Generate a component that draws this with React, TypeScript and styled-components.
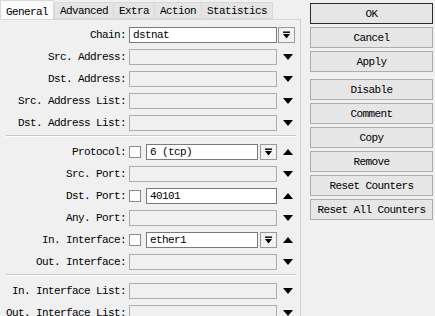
import React from "react";
import styled, { createGlobalStyle } from "styled-components";

const GlobalStyle = createGlobalStyle`
  html, body {
    margin: 0;
    padding: 0;
    background: #f0f0f0;
  }
  body {
    font-family: "Liberation Mono", "DejaVu Sans Mono", monospace;
    font-size: 11px;
    letter-spacing: -0.6px;
    color: #000;
  }
`;

const Window = styled.div`
  display: flex;
  width: 435px;
  height: 316px;
  overflow: hidden;
  background: #f0f0f0;
`;

const LeftSide = styled.div`
  width: 301px;
  display: flex;
  flex-direction: column;
`;

const TabBar = styled.div`
  display: flex;
  align-items: flex-end;
  height: 19px;
`;

const Tab = styled.div<{ $active?: boolean }>`
  height: ${(p) => (p.$active ? "19px" : "17px")};
  box-sizing: border-box;
  padding: 0 5px;
  border: 1px solid #d9d9d9;
  border-bottom: ${(p) => (p.$active ? "none" : "1px solid #d9d9d9")};
  margin-right: ${(p) => (p.$active ? "0" : "-1px")};
  background: ${(p) => (p.$active ? "#fbfbfb" : "#e4e4e4")};
  line-height: ${(p) => (p.$active ? "22px" : "17px")};
  white-space: nowrap;
`;

const Panel = styled.div`
  flex: 1;
  border-top: 1px solid #d9d9d9;
  border-right: 1px solid #d0d0d0;
  padding-top: 7px;
`;

const Section = styled.div`
  display: flex;
  flex-direction: column;
  gap: 6px;
`;

const Separator = styled.div`
  margin: 4px 4px 7px 6px;
  height: 1px;
  background: #c9c9c9;
  border-bottom: 1px solid #ffffff;
`;

const Row = styled.div`
  display: flex;
  align-items: center;
  height: 16px;
`;

const Label = styled.div`
  width: 126px;
  text-align: right;
  line-height: 16px;
  white-space: nowrap;
`;

const Field = styled.div`
  display: flex;
  align-items: center;
  width: 148px;
  margin-left: 3px;
  height: 16px;
`;

const Input = styled.div<{ $enabled?: boolean }>`
  flex: 1;
  height: 16px;
  box-sizing: border-box;
  border: 1px solid ${(p) => (p.$enabled ? "#7a7a7a" : "#adadad")};
  background: ${(p) => (p.$enabled ? "#ffffff" : "#f0f0f0")};
  padding-left: 3px;
  line-height: 14px;
  white-space: nowrap;
  overflow: hidden;
`;

const CheckBox = styled.div`
  width: 12px;
  height: 12px;
  box-sizing: border-box;
  border: 1px solid #8a8a8a;
  background: #fff;
  margin-right: 5px;
`;

const DropButton = styled.div<{ $inField?: boolean }>`
  width: 17px;
  height: 16px;
  box-sizing: border-box;
  border: 1px solid #9a9a9a;
  background: #f2f2f2;
  margin-left: ${(p) => (p.$inField ? "2px" : "0")};
  display: flex;
  align-items: center;
  justify-content: center;
`;

const Slot = styled.div`
  width: 18px;
  margin-left: 1px;
  height: 16px;
  display: flex;
  align-items: center;
  justify-content: center;
`;

const ArrowSlot = styled(Slot)`
  padding-left: 2px;
  box-sizing: border-box;
`;

const ButtonColumn = styled.div`
  display: flex;
  flex-direction: column;
  gap: 3px;
  margin-left: 9px;
  padding-top: 3px;
  width: 123px;
`;

const Button = styled.div<{ $default?: boolean; $gapAbove?: boolean }>`
  height: 21px;
  box-sizing: border-box;
  border: 1px solid ${(p) => (p.$default ? "#2b2b2b" : "#adadad")};
  background: #e6e6e6;
  display: flex;
  align-items: center;
  justify-content: center;
  white-space: nowrap;
  margin-top: ${(p) => (p.$gapAbove ? "4px" : "0")};
`;

const DropGlyph = () => (
  <svg width="9" height="9" viewBox="0 0 9 9">
    <rect x="1" y="0.5" width="7" height="1.4" fill="#000" />
    <polygon points="1,3 8,3 4.5,7.5" fill="#000" />
  </svg>
);

const Arrow = ({ up }: { up?: boolean }) => (
  <svg width="10" height="6" viewBox="0 0 10 6">
    {up ? <polygon points="0,6 10,6 5,0" fill="#000" /> : <polygon points="0,0 10,0 5,6" fill="#000" />}
  </svg>
);

type FieldRow = {
  label: string;
  value?: string;
  check?: boolean;
  drop?: boolean;
  arrow?: "up" | "down";
};

const sections: FieldRow[][] = [
  [
    { label: "Chain:", value: "dstnat", drop: true },
    { label: "Src. Address:", arrow: "down" },
    { label: "Dst. Address:", arrow: "down" },
    { label: "Src. Address List:", arrow: "down" },
    { label: "Dst. Address List:", arrow: "down" },
  ],
  [
    { label: "Protocol:", value: "6 (tcp)", check: true, drop: true, arrow: "up" },
    { label: "Src. Port:", arrow: "down" },
    { label: "Dst. Port:", value: "40101", check: true, arrow: "up" },
    { label: "Any. Port:", arrow: "down" },
    { label: "In. Interface:", value: "ether1", check: true, drop: true, arrow: "up" },
    { label: "Out. Interface:", arrow: "down" },
  ],
  [
    { label: "In. Interface List:", arrow: "down" },
    { label: "Out. Interface List:", arrow: "down" },
  ],
];

const tabs = ["General", "Advanced", "Extra", "Action", "Statistics"];

const buttons = [
  "OK",
  "Cancel",
  "Apply",
  "Disable",
  "Comment",
  "Copy",
  "Remove",
  "Reset Counters",
  "Reset All Counters",
];

const renderRow = (row: FieldRow) => {
  const enabled = row.value !== undefined;
  // Chain has its dropdown outside the field, the checkbox rows keep it inside
  const dropInside = row.drop && row.check;
  return (
    <Row key={row.label}>
      <Label>{row.label}</Label>
      <Field>
        {row.check && <CheckBox />}
        <Input $enabled={enabled}>{row.value}</Input>
        {dropInside && (
          <DropButton $inField>
            <DropGlyph />
          </DropButton>
        )}
      </Field>
      {row.drop && !row.check ? (
        <Slot style={{ justifyContent: "flex-start" }}>
          <DropButton>
            <DropGlyph />
          </DropButton>
        </Slot>
      ) : row.arrow ? (
        <ArrowSlot>
          <Arrow up={row.arrow === "up"} />
        </ArrowSlot>
      ) : null}
    </Row>
  );
};

export default function App() {
  return (
    <>
      <GlobalStyle />
      <Window>
        <LeftSide>
          <TabBar>
            {tabs.map((t, i) => (
              <Tab key={t} $active={i === 0}>
                {t}
              </Tab>
            ))}
          </TabBar>
          <Panel>
            {sections.map((rows, i) => (
              <React.Fragment key={i}>
                {i > 0 && <Separator />}
                <Section>{rows.map(renderRow)}</Section>
              </React.Fragment>
            ))}
          </Panel>
        </LeftSide>
        <ButtonColumn>
          {buttons.map((b) => (
            <Button key={b} $default={b === "OK"} $gapAbove={b === "Disable"}>
              {b}
            </Button>
          ))}
        </ButtonColumn>
      </Window>
    </>
  );
}
